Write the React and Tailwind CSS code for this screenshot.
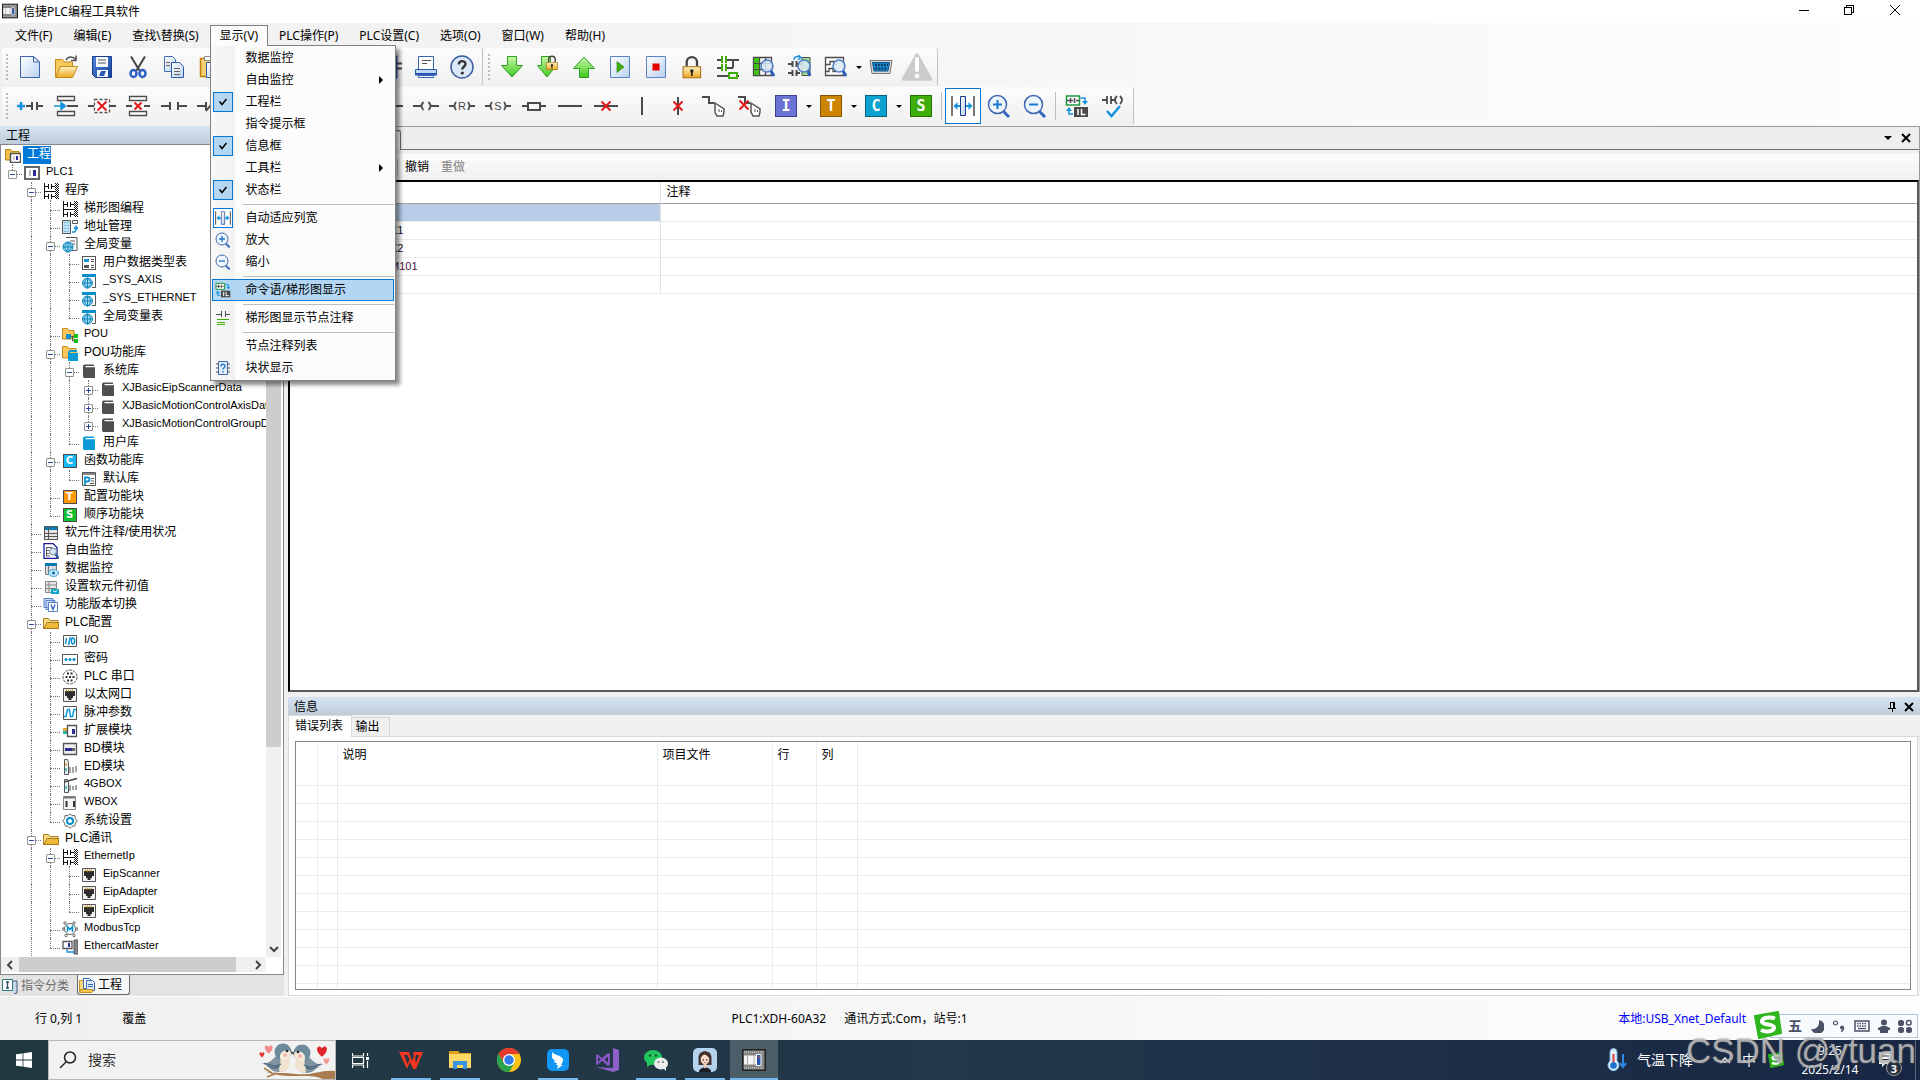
import React from "react";

const UI = "font-['Noto_Sans','Noto_Sans_CJK_SC',sans-serif]";
const DARK = "#4b4b4b";

function Svg({ s = 24, w, h, children, crisp }) {
  const W = w || s;
  const H = h || s;
  return (
    <svg
      width={W}
      height={H}
      viewBox={`0 0 ${W} ${H}`}
      fill="none"
      shapeRendering={crisp ? "crispEdges" : "auto"}
      className="block shrink-0"
      aria-hidden="true"
    >
      {children}
    </svg>
  );
}

/* ---------- shared gradients ---------- */
function Defs() {
  return (
    <svg width="0" height="0" className="absolute" aria-hidden="true">
      <defs>
        <linearGradient id="page" x1="0" y1="0" x2="1" y2="1">
          <stop offset="0" stopColor="#ffffff" />
          <stop offset="1" stopColor="#b9d0ee" />
        </linearGradient>
        <linearGradient id="gold" x1="0" y1="0" x2="0" y2="1">
          <stop offset="0" stopColor="#fff3c4" />
          <stop offset="1" stopColor="#f0a51e" />
        </linearGradient>
        <linearGradient id="green" x1="0" y1="0" x2="0" y2="1">
          <stop offset="0" stopColor="#c8f7a8" />
          <stop offset="1" stopColor="#3fc81e" />
        </linearGradient>
        <linearGradient id="blue" x1="0" y1="0" x2="1" y2="1">
          <stop offset="0" stopColor="#4f86d8" />
          <stop offset="1" stopColor="#1742a0" />
        </linearGradient>
      </defs>
    </svg>
  );
}

/* ---------- file toolbar icons ---------- */
const NewIcon = () => (
  <Svg>
    <path d="M2.5 1.500h13l6 5.500v15.500h-19z" fill="url(#page)" stroke="#3c64a8" />
    <path d="M15.500 1.500v5.500h6z" fill="#e7f0fc" stroke="#3c64a8" />
  </Svg>
);
const OpenIcon = () => (
  <Svg>
    <path d="M1.500 22V4.500h7l2 2.500h8v4" fill="#f5c95c" stroke="#c68a17" />
    <path d="M1.500 22.500l5-11h17l-5 11z" fill="url(#gold)" stroke="#c68a17" />
    <path d="M12 5c2-4 7-4 9.500-.5M22 0.500v5h-5" stroke="#555" strokeWidth="1.500" />
  </Svg>
);
const SaveIcon = () => (
  <Svg>
    <path d="M2.500 1.500h19v21h-16l-3-3z" fill="url(#blue)" stroke="#1b3c86" />
    <path d="M6 2h12v10H6z" fill="#f6f9ff" />
    <path d="M8 5h8M8 8h8" stroke="#555" />
    <path d="M7 15h11v7H7z" fill="#f6f9ff" />
    <path d="M9 21l2-5h5l-2 5z" fill="#2a5bb8" />
  </Svg>
);
const CutIcon = () => (
  <Svg>
    <path d="M5 1.500l8.500 14M19 1.500l-8.500 14" stroke="#444" strokeWidth="2" />
    <ellipse cx="7.500" cy="18.500" rx="3" ry="3.500" stroke="#2e62c4" strokeWidth="2.500" />
    <ellipse cx="16.500" cy="18.500" rx="3" ry="3.500" stroke="#2e62c4" strokeWidth="2.500" />
  </Svg>
);
const CopyIcon = () => (
  <Svg>
    <path d="M2.500 1.500h8l3 3v12h-11z" fill="url(#page)" stroke="#4270b8" />
    <path d="M9.500 7.500h8l4 4v11h-12z" fill="url(#page)" stroke="#2f5ca8" />
    <path d="M12 13.500h6M12 16.500h6M12 19.500h6M4 7.500h4M4 10.500h4" stroke="#666" />
  </Svg>
);
const PasteIcon = () => (
  <Svg>
    <path d="M2.500 3.500h16v18h-16z" fill="#f7cf70" stroke="#c07d0e" strokeWidth="1.500" />
    <path d="M6.500 1.500h8v4h-8z" fill="#fff" stroke="#888" />
    <path d="M8.500 7.500h10l3 3v12h-13z" fill="url(#page)" stroke="#2f5ca8" />
    <path d="M12 13.500h6M12 16.500h6" stroke="#666" />
  </Svg>
);
const FindReplaceIcon = () => (
  <Svg>
    <path d="M2.500 1.500h16v21h-16z" fill="url(#page)" stroke="#2f5ca8" strokeWidth="2" />
    <path d="M19 8.500h5M19 13.500h5" stroke={DARK} strokeWidth="2" />
  </Svg>
);
const PrintIcon = () => (
  <Svg>
    <path d="M4.500 1.500h15v13h-15z" fill="#fff" stroke="#3a66b0" />
    <path d="M8 5.500h9M8 8.500h5" stroke="#555" />
    <path d="M1.500 14.500h21v4h-21z" fill="#c3d8f5" stroke="#2f5ca8" />
    <path d="M1 18h22v2.500H1z" fill="#2858b5" />
    <path d="M4.500 20.500h15v2h-15z" fill="#fff" stroke="#3a66b0" />
  </Svg>
);
const HelpIcon = () => (
  <Svg>
    <circle cx="12" cy="12" r="11" fill="#dbe8f8" stroke="#3a5f9f" strokeWidth="1.500" />
    <path d="M8.800 9.500c0-4.500 6.700-4.300 6.700-.5 0 2.500-3.200 2.600-3.200 5.500" stroke="#333" strokeWidth="2.400" />
    <circle cx="12.300" cy="18" r="1.600" fill="#333" />
  </Svg>
);
const ArrowDown = () => (
  <Svg>
    <path d="M7.500 1.500h9v9h6L12 22 1.500 10.500h6z" fill="url(#green)" stroke="#2e9e27" />
  </Svg>
);
const ArrowUp = () => (
  <Svg>
    <path d="M7.500 22.500h9v-9h6L12 2 1.500 13.500h6z" fill="url(#green)" stroke="#2e9e27" />
  </Svg>
);
const LockShape = ({ x, y, k }) => (
  <g transform={`translate(${x} ${y}) scale(${k})`}>
    <path d="M7 11V7a5 5 0 0110 0v4" stroke="#444" strokeWidth="2.200" />
    <path d="M3.500 11.500h17v10.500h-17z" fill="url(#gold)" stroke="#a76d12" />
    <path d="M10.500 14h3v2.500l-.7.800v3h-1.600v-3l-.7-.8z" fill="#222" />
  </g>
);
const ArrowLock = () => (
  <Svg>
    <path d="M5.500 1.500h9v9h6L11 22 1.500 10.500h4z" fill="url(#green)" stroke="#2e9e27" />
    <LockShape x={8} y={0} k={0.66} />
  </Svg>
);
const LockIcon = () => (
  <Svg>
    <LockShape x={-0.500} y={0} k={1.030} />
  </Svg>
);
const PlayIcon = () => (
  <Svg>
    <path d="M2.500 1.500h19v21h-19z" fill="url(#page)" stroke="#5b83c4" />
    <path d="M9 6.500v11l7-5.500z" fill="#3fae0a" stroke="#2c7c08" strokeWidth=".6" />
  </Svg>
);
const StopIcon = () => (
  <Svg>
    <path d="M2.500 1.500h19v21h-19z" fill="url(#page)" stroke="#5b83c4" />
    <path d="M8.500 8.500h7v7h-7z" fill="#e60000" />
  </Svg>
);
const LadderIcon = () => (
  <Svg crisp>
    <path d="M1 4.500h5M10 4.500h13M1 12.500h5M10 12.500h7M16.500 4v9M1 20.500h11M20 20.500h3" stroke={DARK} strokeWidth="2" />
    <path d="M6 1v7M10 1v7M6 9v7M10 9v7" stroke="#3fae0a" strokeWidth="2" />
    <path d="M13 18h8v5h-8z" stroke="#3fae0a" strokeWidth="2" />
  </Svg>
);
const Lens = ({ x = 15, y = 11, r = 6, ex = 22, ey = 21 }) => (
  <>
    <path d={`M${x + r * 0.600} ${y + r * 0.700}L${ex} ${ey}`} stroke="#2d5fc0" strokeWidth="3" />
    <circle cx={x} cy={y} r={r} fill="#dbeaf8" fillOpacity=".85" stroke="#4f7cc4" strokeWidth="1.500" />
  </>
);
const TableLens = () => (
  <Svg>
    <path d="M1.500 2.500h18v18h-18zM7.500 2.500v18M13.500 2.500v18M1.500 8.500h18M1.500 14.500h18" stroke={DARK} strokeWidth="1.300" />
    <path d="M2 3h5v17H2z" fill="#3fc010" />
    <path d="M2 8.500h5M2 14.500h5" stroke={DARK} />
    <Lens />
  </Svg>
);
const ContactLens = () => (
  <Svg>
    <path d="M0 9h4M9 9h5M0 18h4M9 18h3M4.500 6v6M8.500 6v6M4.500 15v6M8.500 15v6" stroke={DARK} strokeWidth="2" />
    <path d="M14 2.500h8v18h-8z" fill="#9fe08a" stroke={DARK} />
    <path d="M6 5c0-3 2-4 6-3M10 0l3 2.500-3 2.500" stroke="#1593dd" strokeWidth="1.500" />
    <Lens x={16} />
  </Svg>
);
const WaveLens = () => (
  <Svg>
    <path d="M1.500 2.500h18v18h-18z" fill="#fff" stroke={DARK} strokeWidth="1.300" />
    <path d="M2 9.500h4v-3h4v3h3M2 16.500h3v-3h4v3h3" stroke={DARK} strokeWidth="1.300" />
    <Lens />
  </Svg>
);
const PortIcon = () => (
  <Svg>
    <path d="M1 5.500h22l-2 13H3z" fill="#d9d9d9" stroke="#777" />
    <path d="M3.500 7.500h17l-1.500 8.500h-14z" fill="#1486cc" stroke="#0d4f80" />
    <path d="M6 10h13M6.500 13.500h12" stroke="#072d4d" strokeWidth="2" strokeDasharray="1.600 1.400" />
  </Svg>
);
const WarnIcon = () => (
  <Svg s={32}>
    <path d="M16 4L29.500 28h-27z" fill="#cbcbcb" stroke="#cbcbcb" strokeWidth="3.500" strokeLinejoin="round" />
    <path d="M16 8v11" stroke="#fff" strokeWidth="4" strokeLinecap="round" />
    <circle cx="16" cy="25" r="2.200" fill="#fff" />
  </Svg>
);

/* ---------- ladder toolbar icons ---------- */
const L = (props) => <path stroke={DARK} strokeWidth="2" {...props} />;
const RedX = ({ x = 12, y = 12, r = 4.500 }) => (
  <path d={`M${x - r} ${y - r}l${r * 2} ${r * 2}M${x + r} ${y - r}l${-r * 2} ${r * 2}`} stroke="#e01b1b" strokeWidth="2" />
);
const InsertContact = () => (
  <Svg w={28} h={24}>
    <path d="M1 12h8M5 8v8" stroke="#1593dd" strokeWidth="2.500" />
    <L d="M10 12h6M16 8v8M21 8v8M21 12h6" />
  </Svg>
);
const InsertRow = () => (
  <Svg>
    <path d="M3.500 2.500h17v4h-17zM3.500 17.500h17v4h-17z" fill="#fff" stroke={DARK} strokeWidth="1.300" />
    <L d="M13 12h11" />
    <path d="M0 12h9M7 8.500l4.500 3.500L7 15.500z" fill="#1593dd" stroke="#1593dd" strokeWidth="1.500" />
  </Svg>
);
const DelContact = () => (
  <Svg w={28} h={24}>
    <L d="M0 12h6M22 12h6" />
    <path d="M6.500 5.500h15v13h-15z" fill="#fff" stroke={DARK} strokeDasharray="3 2" strokeWidth="1.300" />
    <RedX x={14} />
  </Svg>
);
const DelRow = () => (
  <Svg>
    <path d="M3.500 2.500h17v4h-17zM3.500 17.500h17v4h-17z" fill="#fff" stroke={DARK} strokeWidth="1.300" />
    <L d="M0 12h6M18 12h6" />
    <RedX r={3.500} />
  </Svg>
);
const Contact = () => (
  <Svg w={28} h={24} crisp>
    <L d="M1 12h9M10 8v8M18 8v8M18 12h9" />
  </Svg>
);
const ContactNc = () => (
  <Svg w={28} h={24}>
    <L d="M1 12h9M10 8v8M18 8v8M18 12h9M10 17l8-10" />
  </Svg>
);
const Coil = ({ t }) => (
  <Svg w={28} h={24}>
    <L d={t ? "M1 12h6M21 12h6" : "M1 12h8M19 12h8"} />
    <path d={t ? "M8 8q-3 4 0 8M20 8q3 4 0 8" : "M11.500 8q-4 4 0 8M16.500 8q4 4 0 8"} stroke={DARK} strokeWidth="1.800" />
    {t && (
      <text x="14" y="16" textAnchor="middle" fontSize="11" fill={DARK} fontFamily="Liberation Sans">
        {t}
      </text>
    )}
  </Svg>
);
const BoxIcon = () => (
  <Svg crisp>
    <L d="M0 12h6M18 12h6M6 8.500h12v7H6z" />
  </Svg>
);
const HLine = ({ x }) => (
  <Svg>
    <L d="M0 12h24" />
    {x && <RedX />}
  </Svg>
);
const VLine = ({ x }) => (
  <Svg>
    <L d="M12 3v18" />
    {x && <RedX />}
  </Svg>
);
const DrawLine = ({ x }) => (
  <Svg>
    <L d="M0 3h7v6h5" />
    {x && <RedX x={6} y={11} />}
    <path d="M13 9l9 6v3l-1 4h-6l-2-4z" fill="#fff" stroke="#555" strokeWidth="1.500" />
    <path d="M17 15v3M19.500 16v2" stroke="#555" />
  </Svg>
);
function Letter({ t, c, b, small }) {
  return small ? (
    <span
      className="flex size-[14px] shrink-0 items-center justify-center border border-[#4b4b4b] text-[10px] leading-none font-bold text-white font-['DejaVu_Sans',sans-serif]"
      style={{ background: c }}
    >
      {t}
    </span>
  ) : (
    <span
      className="flex size-[22px] shrink-0 items-center justify-center border text-[15px] leading-none font-bold text-white font-['DejaVu_Sans_Mono',monospace]"
      style={{ background: c, borderColor: b }}
    >
      {t}
    </span>
  );
}
const FitIcon = ({ s = 24 }) => (
  <svg width={s} height={s} viewBox="0 0 24 24" fill="none" className="block shrink-0" aria-hidden="true">
    <path d="M1 2v20M23 2v20" stroke={DARK} strokeWidth="1.500" />
    <path d="M9.500 2.500h5v19h-5z" fill="url(#page)" stroke="#1b3c86" />
    <path d="M4 12h5M15 12h5" stroke="#1593dd" strokeWidth="2" />
    <path d="M2.500 12l4-4v8zM21.500 12l-4-4v8z" fill="#1593dd" />
  </svg>
);
const ZoomIcon = ({ plus, s = 24 }) => (
  <svg width={s} height={s} viewBox="0 0 24 24" fill="none" className="block shrink-0" aria-hidden="true">
    <path d="M16 17l6 6" stroke="#3467c0" strokeWidth="3" />
    <circle cx="10.500" cy="10.500" r="9" fill="#eef5fd" stroke="#3f68b0" strokeWidth="1.500" />
    <path d={plus ? "M6 10.500h9M10.500 6v9" : "M6 10.500h9"} stroke="#1b78d0" strokeWidth="2" />
  </svg>
);
const SwapIcon = ({ s = 24 }) => (
  <svg width={s} height={s} viewBox="0 0 24 24" fill="none" className="block shrink-0" aria-hidden="true">
    <path d="M1.500 2h13v9h-13z" fill="#fff" stroke="#1b9a3c" strokeWidth="1.500" />
    <path d="M2 6.500h3M11 6.500h3M5.500 4v5M8 6.500h-2M9.500 4v5" stroke={DARK} strokeWidth="1.500" />
    <path d="M15.500 4h4.500v5" stroke="#1593dd" strokeWidth="1.500" />
    <path d="M17 7h6l-3 4zM1 17h6l-3-4z" fill="#1593dd" />
    <path d="M4 16v4h4" stroke="#1593dd" strokeWidth="1.500" />
    <path d="M9 13h14v10H9z" fill="#4b4b4b" />
    <path d="M13 15v6M16.500 15v5.500h4" stroke="#fff" strokeWidth="1.500" />
  </svg>
);
const CheckLogic = () => (
  <Svg>
    <path d="M1 6h5M6 2v8M10 2v8M10 6h4M16 2q-4 4 0 8M19 2q4 4 0 8" stroke={DARK} strokeWidth="1.800" />
    <path d="M6 17l4.500 5L19 12" stroke="#1593dd" strokeWidth="2.500" />
  </Svg>
);
const NoteIcon = () => (
  <Svg s={16} crisp>
    <path d="M1 4h5M10 4h5M6 1v6M10 1v6" stroke={DARK} />
    <path d="M2 9.500h12M2 12h8M2 14.500h8" stroke="#3fae0a" />
  </Svg>
);
const BlockIcon = () => (
  <Svg s={16}>
    <path d="M3.500 1.500h9v13h-9z" fill="#e4eefb" stroke="#3f68b0" />
    <path d="M1 4h2.500M1 8h2.500M1 12h2.500M12.500 4H15M12.500 8H15M12.500 12H15" stroke="#555" />
    <path d="M6 6.500c0-3 4-3 4-.3 0 1.600-2 1.600-2 3.300M8 11v1.500" stroke="#1b78d0" strokeWidth="1.400" />
  </Svg>
);

/* ---------- tree icons ---------- */
const K = "#555";
const treeIcons = {
  root: (
    <Svg s={16}>
      <path d="M.5 2.500h5l1.500 2h7V13H.5z" fill="#f3c04d" stroke="#b98418" />
      <path d="M5.500 6.500h10v9h-10z" fill="#fff" stroke={K} strokeWidth="1.500" />
      <path d="M11 9h2v4h-2z" fill="#2a2a90" />
      <path d="M8 9h2v4H8z" fill="#ccc" />
    </Svg>
  ),
  plc: (
    <Svg s={16} crisp>
      <path d="M1 2h14v12H1z" fill="#fff" stroke="#666" strokeWidth="2" />
      <path d="M9 5h3v6H9z" fill="#2a2a90" />
      <path d="M5 5h2v6H5z" fill="#bbb" />
    </Svg>
  ),
  ladder: (
    <Svg s={16} crisp>
      <path d="M1.500 0v16M1 3.500h4M8 3.500h4M1 8.500h11M1 13.500h4M8 13.500h4M5.500 1v5M8.500 1v5M5.500 11v5M8.500 11v5" stroke="#111" />
      <path d="M12.500 0v16M14.500 0v16" stroke="#111" strokeDasharray="1 1" />
      <path d="M13.500 1v15M15.500 1v15" stroke="#111" strokeDasharray="1 1" />
    </Svg>
  ),
  addr: (
    <Svg s={16}>
      <path d="M.5 1.500h8v13h-8z" fill="#bfe3f7" stroke={K} />
      <path d="M3 3v11M6 3v11" stroke="#3a8ab8" strokeDasharray="1 2" />
      <path d="M10.500 1.500h5v3h-5z" fill="#fff" stroke={K} />
      <path d="M10 13h2c2 0 2-2 2-4M12 10l2-2.500 2 2.500" stroke="#1593dd" strokeWidth="1.500" />
    </Svg>
  ),
  globalDoc: (
    <Svg s={16}>
      <path d="M4 .5h11v13H9" fill="#fff" stroke={K} />
      <path d="M8 4h5M10 7h3" stroke={K} />
      <circle cx="6" cy="10" r="5" fill="#9fd8f2" stroke="#0f86bb" />
      <path d="M1 10h10M6 5v10M6 5c-4 3-4 7 0 10M6 5c4 3 4 7 0 10" stroke="#0f86bb" />
    </Svg>
  ),
  types: (
    <Svg s={16} crisp>
      <path d="M1.500 1.500h13v13h-13z" fill="#fff" stroke={K} />
      <path d="M3 4h5v3H3z" fill="#1593dd" />
      <path d="M3 10h5v3H3z" fill={K} />
      <path d="M10 4.500h3M10 6.500h3M10 10.500h3M10 12.500h3" stroke={K} />
    </Svg>
  ),
  globe: (
    <Svg s={16}>
      <path d="M1 2h13.500v12.500H11" fill="#fff" stroke={K} />
      <path d="M1 1h14v3H1z" fill="#0a8fce" />
      <circle cx="6.500" cy="10" r="5" fill="#9fd8f2" stroke="#0f86bb" />
      <path d="M1.500 10h10M6.500 5v10M6.500 5c-4 3-4 7 0 10M6.500 5c4 3 4 7 0 10" stroke="#0f86bb" />
    </Svg>
  ),
  pou: (
    <Svg s={16}>
      <path d="M.5 1.500h5l1.500 2h5V12H.5z" fill="#fbc65b" stroke="#c08b1c" />
      <path d="M4 7h5v5H4z" fill="#0a8fce" />
      <path d="M12 7h4v4h-4zM12 12h4v4h-4z" fill="#0fc20f" />
      <path d="M9 9.500h3M10.500 9v5h2" stroke={K} />
    </Svg>
  ),
  pouLib: (
    <Svg s={16}>
      <path d="M.5 1.500h5l1.500 2h7V13H.5z" fill="#fbc65b" stroke="#c08b1c" />
      <path d="M6 7l1.500-2H15v2h-7v1h8v8H6z" fill="#0a9ad6" />
    </Svg>
  ),
  book: (
    <Svg s={16}>
      <path d="M2 3.500C2 2 3 1.500 4 1.500h9v1.500H4.500v1.200H14V15H4c-1.500 0-2-.5-2-2z" fill="#4f4f4f" />
    </Svg>
  ),
  bookBlue: (
    <Svg s={16}>
      <path d="M2 3.500C2 2 3 1.500 4 1.500h9v1.500H4.500v1.200H14V15H4c-1.500 0-2-.5-2-2z" fill="#0a9ad6" />
    </Svg>
  ),
  c: <Letter small t="C" c="#17b9f5" />,
  t: <Letter small t="T" c="#ff9900" />,
  s: <Letter small t="S" c="#10c030" />,
  p: (
    <Svg s={16}>
      <path d="M1.500 1.500h13v13h-13z" fill="#fff" stroke={K} />
      <path d="M2 2h12v2H2z" fill="#888" />
      <path d="M4 14V6.500h2.500a2 2 0 010 4H4" stroke="#0a8fce" strokeWidth="1.800" />
      <path d="M10 7.500h3M10 10h3M9 12.500h4" stroke={K} />
    </Svg>
  ),
  table: (
    <Svg s={16} crisp>
      <path d="M1.500 1.500h13v13h-13z" fill="#e4e4e4" stroke={K} />
      <path d="M2 2h12v3H2z" fill="#0a7bb4" />
      <path d="M5.500 2v12M2 8.500h12M2 11.500h12" stroke={K} />
    </Svg>
  ),
  free: (
    <Svg s={16}>
      <path d="M1 .5h9l4 4v11H1z" fill="#fff" stroke="#1a1a9a" strokeWidth="1.300" />
      <path d="M3 4.500h6M3 7.500h3M3 10.500h3M3 13h4M3.500 4v9" stroke={K} />
      <path d="M12 11l4 4.500" stroke="#2d4fa0" strokeWidth="2" />
      <circle cx="10" cy="8.500" r="3.500" fill="#cfe7f5" stroke="#789" />
    </Svg>
  ),
  data: (
    <Svg s={16}>
      <path d="M2.500 2.500h11v11h-11z" fill="#ddd" stroke="#777" />
      <path d="M2 2h12v3H2z" fill="#0a7bb4" />
      <path d="M5.500 5v9" stroke="#777" />
      <ellipse cx="10.500" cy="12" rx="5" ry="3.500" fill="#bfe8fa" stroke="#38a3d0" />
      <circle cx="10.500" cy="12" r="1.500" fill="#0a6fa6" />
    </Svg>
  ),
  init: (
    <Svg s={16}>
      <path d="M2.500 2.500h11v11h-11z" fill="#e6e6e6" stroke="#888" />
      <path d="M2.500 6h11M2.500 9.500h11M6 2v12" stroke="#888" />
      <path d="M8 10h8v5H8z" fill="#0aa5c8" />
      <path d="M10 11.500l2 1.500 2-1.500" stroke="#fff" />
    </Svg>
  ),
  ver: (
    <Svg s={16}>
      <path d="M1 1.500h9v9H1zM3 3.500h9v9H3z" fill="#c6dcf6" stroke="#5b83c4" />
      <path d="M5.500 5.500h9v9h-9z" fill="#fff" stroke="#5b83c4" />
      <path d="M8 7.500l2 5 2-5" stroke="#2763c4" strokeWidth="1.300" />
    </Svg>
  ),
  folder: (
    <Svg s={16}>
      <path d="M.5 13.500v-10h5l1.500 2h8v8z" fill="#f6d984" stroke="#a87a1c" />
      <path d="M1 13.500l3-6h11.500v6z" fill="#f0b93a" stroke="#a87a1c" />
    </Svg>
  ),
  io: (
    <Svg s={16}>
      <path d="M1.500 2.500h13v11h-13z" fill="#fff" stroke={K} />
      <path d="M4.500 5L3.500 11M8.500 4L6.500 12" stroke="#0a8fce" strokeWidth="1.500" />
      <ellipse cx="11" cy="8" rx="1.600" ry="3" stroke="#0a8fce" strokeWidth="1.500" />
    </Svg>
  ),
  pwd: (
    <Svg s={16}>
      <path d="M.5 3.500h15v10H.5z" fill="#fff" stroke={K} />
      <circle cx="4" cy="8.500" r="1.500" fill="#0a8fce" />
      <circle cx="8" cy="8.500" r="1.500" fill="#0a8fce" />
      <circle cx="12" cy="8.500" r="1.500" fill="#0a8fce" />
    </Svg>
  ),
  serial: (
    <Svg s={16}>
      <circle cx="8" cy="8" r="7" fill="#fff" stroke={K} strokeDasharray="3 1" />
      <path d="M5 4.500h7M3.500 8h10M5 11.500h7" stroke="#333" strokeWidth="2" strokeDasharray="2 1.500" />
    </Svg>
  ),
  eth: (
    <Svg s={16}>
      <path d="M1.500 1.500h13v13h-13z" fill="#f2f2f2" stroke={K} />
      <path d="M3 4h10v5h-2v2H9.500v2h-3v-2H5V9H3z" fill="#2d2d2d" />
      <path d="M4 3.500h8" stroke="#c99a30" strokeWidth="2" strokeDasharray="1 1" />
    </Svg>
  ),
  pulse: (
    <Svg s={16}>
      <path d="M1.500 1.500h13v13h-13z" fill="#fff" stroke={K} />
      <path d="M2 11.500h2l1.500-7h2l1 7h2l1.500-7H14" stroke="#0a9ad6" strokeWidth="1.500" />
    </Svg>
  ),
  ext: (
    <Svg s={16}>
      <path d="M1 5h5v3H1z" fill="#e5a13a" />
      <path d="M1 8h5v3H1z" fill="#28b5a5" />
      <path d="M5.500 2.500h9v11h-9z" fill="#fff" stroke={K} strokeWidth="1.300" />
      <path d="M10 6h3v5h-3z" fill="#2a2a90" />
    </Svg>
  ),
  bd: (
    <Svg s={16}>
      <path d="M1.500 2.500h13v11h-13z" fill="#eee" stroke={K} strokeWidth="1.300" />
      <path d="M3 7h7v3H3z" fill="#2a2a90" />
      <path d="M10 7h3v3h-3z" fill="#666" />
    </Svg>
  ),
  ed: (
    <Svg s={16}>
      <path d="M2.500.5h3l1 3v12h-4z" fill="#e8f2f2" stroke={K} />
      <path d="M4 4v3" stroke="#e5a13a" strokeWidth="1.500" />
      <path d="M4 9v3" stroke="#28b5a5" strokeWidth="1.500" />
      <path d="M8 8v6M11 8v6M14 7v6" stroke="#888" strokeWidth="1.500" />
    </Svg>
  ),
  fourg: (
    <Svg s={16}>
      <path d="M2.500 2.500h3l1 2v11h-4z" fill="#e8f2f2" stroke={K} />
      <path d="M2 5l13-3.500" stroke="#444" strokeWidth="1.500" />
      <path d="M4 9v3" stroke="#28b5a5" strokeWidth="1.500" />
      <path d="M8 8v6M11 9v4M14 8v5" stroke="#888" strokeWidth="1.500" />
    </Svg>
  ),
  wbox: (
    <Svg s={16}>
      <path d="M1.500 1.500h12v13h-12z" fill="#f4f4f4" stroke="#888" />
      <path d="M2 2.500h11" stroke="#777" strokeWidth="2" />
      <path d="M4.500 6v6M12 6v6" stroke="#333" strokeWidth="2" />
    </Svg>
  ),
  gear: (
    <Svg s={16}>
      <path d="M8 .8l2 2 2.900-.4.400 2.900 2 2.700-2 2-.4 2.900-2.900.4-2 2-2-2-2.900-.4-.4-2.900-2-2 2-2.700.4-2.900 2.900.4z" fill="#fff" stroke="#666" />
      <circle cx="8" cy="8" r="3" stroke="#0a8fce" strokeWidth="2" />
    </Svg>
  ),
  modbus: (
    <Svg s={16}>
      <circle cx="8" cy="8" r="5.500" fill="#fff" stroke="#666" />
      <path d="M5.500 11V5.500L8 8.500l2.500-3V11" stroke="#0a8fce" strokeWidth="1.500" />
      {[[3, 2], [12, 2], [15, 8], [1, 8], [4, 14.500], [12, 14.500]].map(([x, y]) => (
        <circle key={`${x}-${y}`} cx={x} cy={y} r="1.200" fill="#fff" stroke="#666" />
      ))}
    </Svg>
  ),
  ecat: (
    <Svg s={16}>
      <path d="M1 2.500h9v7H1z" fill="#fff" stroke={K} strokeWidth="1.300" />
      <path d="M6 4h2v4H6z" fill="#2a2a90" />
      <path d="M12 1h4v14h-4z" fill="#888" stroke={K} />
      <path d="M5 10v3h7" stroke="#1593dd" strokeWidth="1.300" />
    </Svg>
  ),
};

/* level, icon, label, expander */
const TREE = [
  [0, "root", "工程"],
  [1, "plc", "PLC1", "-"],
  [2, "ladder", "程序", "-"],
  [3, "ladder", "梯形图编程"],
  [3, "addr", "地址管理"],
  [3, "globalDoc", "全局变量", "-"],
  [4, "types", "用户数据类型表"],
  [4, "globe", "_SYS_AXIS"],
  [4, "globe", "_SYS_ETHERNET"],
  [4, "globe", "全局变量表"],
  [3, "pou", "POU"],
  [3, "pouLib", "POU功能库", "-"],
  [4, "book", "系统库", "-"],
  [5, "book", "XJBasicEipScannerData", "+"],
  [5, "book", "XJBasicMotionControlAxisData", "+"],
  [5, "book", "XJBasicMotionControlGroupData", "+"],
  [4, "bookBlue", "用户库"],
  [3, "c", "函数功能库", "-"],
  [4, "p", "默认库"],
  [3, "t", "配置功能块"],
  [3, "s", "顺序功能块"],
  [2, "table", "软元件注释/使用状况"],
  [2, "free", "自由监控"],
  [2, "data", "数据监控"],
  [2, "init", "设置软元件初值"],
  [2, "ver", "功能版本切换"],
  [2, "folder", "PLC配置", "-"],
  [3, "io", "I/O"],
  [3, "pwd", "密码"],
  [3, "serial", "PLC 串口"],
  [3, "eth", "以太网口"],
  [3, "pulse", "脉冲参数"],
  [3, "ext", "扩展模块"],
  [3, "bd", "BD模块"],
  [3, "ed", "ED模块"],
  [3, "fourg", "4GBOX"],
  [3, "wbox", "WBOX"],
  [3, "gear", "系统设置"],
  [2, "folder", "PLC通讯", "-"],
  [3, "ladder", "EthernetIp", "-"],
  [4, "eth", "EipScanner"],
  [4, "eth", "EipAdapter"],
  [4, "eth", "EipExplicit"],
  [3, "modbus", "ModbusTcp"],
  [3, "ecat", "EthercatMaster"],
];

function continues(i, level) {
  for (let j = i + 1; j < TREE.length; j++) {
    if (TREE[j][0] === level) return true;
    if (TREE[j][0] < level) return false;
  }
  return level === 2;
}

function Guide({ kind, more, exp }) {
  return (
    <span className="relative block h-[18px] w-[19px] shrink-0">
      {(more || kind === "branch") && (
        <span
          className={`absolute top-0 left-[9px] border-l border-dotted border-[#777] ${more ? "h-[18px]" : "h-[10px]"}`}
        />
      )}
      {kind === "branch" && <span className="absolute top-[10px] left-[9px] w-[10px] border-t border-dotted border-[#777]" />}
      {exp && (
        <button
          type="button"
          aria-label={exp === "+" ? "展开" : "折叠"}
          className="absolute top-[6px] left-[5px] size-[9px] rounded-[1px] border border-[#919191] bg-white"
        >
          <span className="absolute top-[3px] left-px h-px w-[5px] bg-[#2b4a9a]" />
          {exp === "+" && <span className="absolute top-px left-[3px] h-[5px] w-px bg-[#2b4a9a]" />}
        </button>
      )}
    </span>
  );
}

function Tree() {
  return (
    <div role="tree" aria-label="工程" className="min-w-0 flex-1 overflow-hidden pl-[2px]">
      {TREE.map(([level, icon, label, exp], i) => {
        const latin = /^[\x20-\x7e]+$/.test(label);
        return (
          <div role="treeitem" key={i} className="flex h-[18px] items-center whitespace-nowrap">
            {Array.from({ length: level }, (_, k) => (
              <Guide key={k} kind={k === level - 1 ? "branch" : "pass"} more={continues(i, k + 1)} exp={k === level - 1 ? exp : null} />
            ))}
            <span className="flex h-[18px] w-[19px] shrink-0 items-center justify-center">{treeIcons[icon]}</span>
            <span
              className={`ml-px h-[18px] pl-1 font-['Liberation_Sans','Noto_Sans_CJK_SC',sans-serif] ${
                latin ? "text-[11px] leading-[15px]" : "text-[12px] leading-[17px]"
              } ${i === 0 ? "bg-[#0078d7] text-white" : "text-black"}`}
            >
              {label}
            </span>
          </div>
        );
      })}
    </div>
  );
}

/* ---------- view menu ---------- */
const Check = () => (
  <Svg s={10}>
    <path d="M1.500 4.500l2.500 3L8.500 2" stroke="#000" strokeWidth="1.500" />
  </Svg>
);
const VIEW_MENU = [
  ["数据监控"],
  ["自由监控", "sub"],
  ["工程栏", "check"],
  ["指令提示框"],
  ["信息框", "check"],
  ["工具栏", "sub"],
  ["状态栏", "check"],
  null,
  ["自动适应列宽", "boxed", <FitIcon s={16} />],
  ["放大", "", <ZoomIcon plus s={16} />],
  ["缩小", "", <ZoomIcon s={16} />],
  null,
  ["命令语/梯形图显示", "hot", <SwapIcon s={16} />],
  null,
  ["梯形图显示节点注释", "", <NoteIcon />],
  null,
  ["节点注释列表"],
  ["块状显示", "", <BlockIcon />],
];

function ViewMenu() {
  return (
    <div
      role="menu"
      className="absolute top-[20px] left-0 z-20 w-[186px] border border-[#808080] bg-[linear-gradient(90deg,#f8f8f8_0,#f1f1f1_24px,#fcfcfc_24px)] p-px shadow-[4px_4px_4px_rgba(0,0,0,0.45)]"
    >
      {VIEW_MENU.map((m, i) => {
        if (!m) return <div key={i} role="separator" className="ml-[31px] flex h-[6px] items-center"><span className="h-px w-full bg-[#bdbdbd]" /></div>;
        const [label, kind, icon] = m;
        return (
          <button
            type="button"
            role={kind === "check" ? "menuitemcheckbox" : "menuitem"}
            aria-checked={kind === "check" ? true : undefined}
            key={i}
            className={`flex h-[22px] w-full items-center border text-left ${
              kind === "hot" ? "border-[#0078d7] bg-[#b3d7f3]" : "border-transparent"
            }`}
          >
            <span
              className={`flex size-[20px] shrink-0 items-center justify-center border ${
                kind === "check" ? "border-[#0078d7] bg-[#b3d7f3]" : kind === "boxed" ? "border-[#0078d7] bg-white" : "border-transparent"
              }`}
            >
              {kind === "check" ? <Check /> : icon}
            </span>
            <span className="flex-1 pl-[13px]">{label}</span>
            {kind === "sub" && <span className="mr-[10px] border-y-4 border-l-4 border-y-transparent border-l-black" />}
          </button>
        );
      })}
    </div>
  );
}

function MenuBar() {
  const items = ["文件(F)", "编辑(E)", "查找\\替换(S)", "显示(V)", "PLC操作(P)", "PLC设置(C)", "选项(O)", "窗口(W)", "帮助(H)"];
  return (
    <nav className="flex h-[25px] items-start gap-px pt-[2px] pl-[5px]">
      {items.map((t) => {
        const open = t.startsWith("显示");
        return (
          <div key={t} className="relative">
            <button
              type="button"
              className={`relative h-[21px] border border-b-0 px-[9px] whitespace-nowrap ${
                open ? "z-30 border-[#808080] bg-[#fcfcfc]" : "border-transparent"
              }`}
            >
              {t}
            </button>
            {open && <ViewMenu />}
          </div>
        );
      })}
    </nav>
  );
}

/* ---------- toolbars ---------- */
const Handle = () => (
  <span className="mx-[4px] my-auto h-[27px] w-[2px] shrink-0 bg-[repeating-linear-gradient(180deg,#bdbdbd_0,#bdbdbd_2px,transparent_2px,transparent_4px)]" />
);
function Tool({ label, children, on }) {
  return (
    <button
      type="button"
      aria-label={label}
      className={`flex h-[36px] w-[36px] shrink-0 items-center justify-center self-center border ${
        on ? "border-[#0078d7] bg-white" : "border-transparent"
      }`}
    >
      {children}
    </button>
  );
}
const Drop = () => (
  <button type="button" aria-label="更多" className="flex w-[9px] shrink-0 items-center justify-center self-center">
    <span className="border-x-[3px] border-t-[3px] border-x-transparent border-t-black" />
  </button>
);
const Sep = () => <span className="my-auto mr-[3px] ml-[2px] h-[28px] w-px shrink-0 bg-[#bdbdbd]" />;
const strip = "flex h-[38px] shrink-0 rounded-[3px] bg-linear-to-b from-[#fcfcfc] to-[#f0f0f0] pr-[2px] border-r border-[#c4c4c4]";

function Toolbars() {
  return (
    <>
      <div className="flex h-[39px] overflow-hidden pl-[2px]">
        <div className={strip}>
          <Handle />
          <Tool label="新建"><NewIcon /></Tool>
          <Tool label="打开"><OpenIcon /></Tool>
          <Tool label="保存"><SaveIcon /></Tool>
          <Tool label="剪切"><CutIcon /></Tool>
          <Tool label="复制"><CopyIcon /></Tool>
          <Tool label="粘贴"><PasteIcon /></Tool>
          <Tool label="后退"><ArrowDown /></Tool>
          <Tool label="前进"><ArrowUp /></Tool>
          <Tool label="查找"><ZoomIcon /></Tool>
          <Tool label="查找表"><TableLens /></Tool>
          <Tool label="替换"><FindReplaceIcon /></Tool>
          <Tool label="打印"><PrintIcon /></Tool>
          <Tool label="帮助"><HelpIcon /></Tool>
        </div>
        <div className={`${strip} ml-px`}>
          <Handle />
          <Tool label="下载"><ArrowDown /></Tool>
          <Tool label="保密下载"><ArrowLock /></Tool>
          <Tool label="上传"><ArrowUp /></Tool>
          <Tool label="运行"><PlayIcon /></Tool>
          <Tool label="停止"><StopIcon /></Tool>
          <Tool label="加密"><LockIcon /></Tool>
          <Tool label="梯形图监控"><LadderIcon /></Tool>
          <Tool label="数据监控"><TableLens /></Tool>
          <Tool label="自由监控"><ContactLens /></Tool>
          <Tool label="示波器"><WaveLens /></Tool>
          <Drop />
          <Tool label="串口"><PortIcon /></Tool>
          <Tool label="警告"><WarnIcon /></Tool>
        </div>
      </div>
      <div className="flex h-[39px] overflow-hidden pl-[2px]">
        <div className={strip}>
          <Handle />
          <Tool label="插入节点"><InsertContact /></Tool>
          <Tool label="插入行"><InsertRow /></Tool>
          <Tool label="删除节点"><DelContact /></Tool>
          <Tool label="删除行"><DelRow /></Tool>
          <Tool label="常开"><Contact /></Tool>
          <Tool label="常闭"><ContactNc /></Tool>
          <Tool label="上升沿"><Contact /></Tool>
          <Tool label="下降沿"><Contact /></Tool>
          <Tool label="取反"><Contact /></Tool>
          <Tool label="立即"><Contact /></Tool>
          <Tool label="立即常闭"><Contact /></Tool>
          <Tool label="线圈"><Coil /></Tool>
          <Tool label="复位"><Coil t="R" /></Tool>
          <Tool label="置位"><Coil t="S" /></Tool>
          <Tool label="指令框"><BoxIcon /></Tool>
          <Tool label="横线"><HLine /></Tool>
          <Tool label="删除横线"><HLine x /></Tool>
          <Tool label="竖线"><VLine /></Tool>
          <Tool label="删除竖线"><VLine x /></Tool>
          <Tool label="画线"><DrawLine /></Tool>
          <Tool label="擦线"><DrawLine x /></Tool>
          <Tool label="指令"><Letter t="I" c="#6a74d4" b="#3b4390" /></Tool>
          <Drop />
          <Tool label="配置"><Letter t="T" c="#cc8500" b="#85540a" /></Tool>
          <Drop />
          <Tool label="函数"><Letter t="C" c="#0aa3d0" b="#0a5f80" /></Tool>
          <Drop />
          <Tool label="顺序"><Letter t="S" c="#3fae0a" b="#22700a" /></Tool>
          <Sep />
          <Tool label="自动适应列宽" on><FitIcon /></Tool>
          <Tool label="放大"><ZoomIcon plus /></Tool>
          <Tool label="缩小"><ZoomIcon /></Tool>
          <Sep />
          <Tool label="命令语/梯形图"><SwapIcon /></Tool>
          <Tool label="语法检查"><CheckLogic /></Tool>
        </div>
      </div>
    </>
  );
}

/* ---------- left panel ---------- */
const Chevron = ({ d }) => (
  <Svg s={10}>
    <path d={d} stroke="#444" strokeWidth="2" />
  </Svg>
);
const barHead = "flex items-center bg-linear-to-b from-[#d6e4f2] to-[#bfcddb]";

function ProjectPanel() {
  return (
    <aside className="flex w-[284px] shrink-0 flex-col">
      <h2 className={`${barHead} h-[18px] shrink-0 pt-px pl-[6px]`}>工程</h2>
      <div className="flex min-h-0 flex-1 flex-col border border-[#828790] bg-white pt-px pb-[2px]">
        <div className="flex min-h-0 flex-1">
          <Tree />
          <div className="mr-[2px] flex w-[15px] shrink-0 flex-col items-center bg-[#f0f0f0]">
            <span className="flex h-[17px] items-center"><Chevron d="M1 7l4-4 4 4" /></span>
            <span className="h-[72%] w-full bg-[#cdcdcd]" />
            <span className="mt-auto flex h-[17px] items-center"><Chevron d="M1 3l4 4 4-4" /></span>
          </div>
        </div>
        <div className="mr-[17px] flex h-[15px] shrink-0 items-center bg-[#f0f0f0]">
          <span className="flex w-[18px] justify-center"><Chevron d="M7 1L3 5l4 4" /></span>
          <span className="h-full w-[217px] bg-[#cdcdcd]" />
          <span className="ml-auto flex w-[17px] justify-center"><Chevron d="M3 1l4 4-4 4" /></span>
        </div>
      </div>
      <div role="tablist" className="flex h-[21px] shrink-0 items-start bg-[#e3e3e3]">
        <button type="button" role="tab" aria-selected="false" className="flex h-[20px] w-[77px] items-center gap-[3px] pt-px pl-[2px] whitespace-nowrap text-[#6d6d6d]">
          <Svg s={16}>
            <path d="M5 3h10v12l-3 1" fill="#c8d8ea" stroke="#3a5f80" />
            <path d="M.5 1.500h10v11H.5z" fill="#fff" stroke="#2a7a78" />
            <path d="M4 4h3M5.500 4v6M4 10h3" stroke="#2a4a6a" strokeWidth="1.300" />
          </Svg>
          指令分类
        </button>
        <button type="button" role="tab" aria-selected="true" className="flex h-[20px] w-[53px] items-center gap-[3px] rounded-b-[3px] border border-t-0 border-[#6a6a6a] bg-[#f6f6f6] pt-px pl-px whitespace-nowrap">
          <Svg s={16}>
            <path d="M.5 3.500h5l1 2v10h-6z" fill="#f7d978" stroke="#c39520" />
            <path d="M4.500 1.500h6l2 2v8h-8z" fill="#fff" stroke="#3a66b0" />
            <path d="M7.500 3.500h6l2 2v8h-8z" fill="#dce8f8" stroke="#3a66b0" />
            <path d="M9 7.500h5M9 9.500h5" stroke="#3a66b0" />
            <path d="M1 15.500v-3h13l-1 3z" fill="#f3c84d" stroke="#c39520" />
          </Svg>
          工程
        </button>
      </div>
    </aside>
  );
}

/* ---------- document ---------- */
const CloseX = () => (
  <Svg s={10}>
    <path d="M1 1l8 8M9 1L1 9" stroke="#000" strokeWidth="2" />
  </Svg>
);
const code = "font-['Liberation_Sans',sans-serif] text-[11px]";

function Document() {
  return (
    <section className="flex min-h-0 flex-1 flex-col border-t border-r border-[#9a9a9a]">
      <div className="flex h-[23px] shrink-0">
        <div className="mt-[3px] w-[113px] shrink-0 rounded-tr-[3px] border-t border-r border-[#6e6e6e] bg-[#fafafa]" />
        <div className="flex flex-1 items-center justify-end gap-[9px] border-b border-[#6e6e6e] bg-[#eeeeee] pr-[8px]">
          <button type="button" aria-label="窗口列表" className="border-x-4 border-t-4 border-x-transparent border-t-black" />
          <button type="button" aria-label="关闭"><CloseX /></button>
        </div>
      </div>
      <div className="mt-[4px] flex h-[25px] shrink-0 items-center gap-[12px] bg-linear-to-b from-[#fcfcfc] to-[#f0f0f0] pl-[109px]">
        <span className="-mr-[5px] h-[16px] w-px bg-[#bdbdbd]" />
        <button type="button">撤销</button>
        <button type="button" className="text-[#838383]">重做</button>
      </div>
      <div className="mt-px min-h-0 flex-1 border-2 border-[#5a5a5a] border-t-black border-l-black bg-white">
        <table className="w-full table-fixed border-collapse text-left">
          <colgroup>
            <col className="w-[370px]" />
            <col />
          </colgroup>
          <thead>
            <tr className="h-[21px] border-b border-[#a0a0a0]">
              <th className="border-r border-[#e2e2e2]" aria-label="命令" />
              <th className="pl-[6px] font-normal">注释</th>
            </tr>
          </thead>
          <tbody>
            {["", "X1", "X2", "M101", ""].map((v, i) => (
              <tr key={i} className="h-[18px] border-b border-[#ececec]">
                <td className={`border-r border-[#e2e2e2] pl-[100px] leading-none ${code} ${i === 0 ? "bg-[#b9cde8]" : ""} ${v === "M101" ? "text-[#4a1040]" : "text-[#1a0a1a]"}`}>{v}</td>
                <td />
              </tr>
            ))}
          </tbody>
        </table>
      </div>
    </section>
  );
}

function InfoPanel() {
  const cols = ["", "", "说明", "项目文件", "行", "列", ""];
  const cell = "border-r border-[#ececec] last:border-r-0";
  return (
    <section className="mt-[5px] flex h-[299px] shrink-0 flex-col">
      <div className={`${barHead} h-[18px] shrink-0 justify-between pt-px pr-[6px] pl-[6px]`}>
        <h2>信息</h2>
        <span className="flex items-center gap-[7px]">
          <button type="button" aria-label="自动隐藏">
            <Svg s={10} crisp>
              <path d="M3 0v6M7 0v6M3 .5h4M6 0v6M1 6.500h8M5 7v3" stroke="#000" />
            </Svg>
          </button>
          <button type="button" aria-label="关闭"><CloseX /></button>
        </span>
      </div>
      <div role="tablist" className="flex h-[22px] shrink-0 border-b border-[#d9d9d9] text-[12px]">
        <button type="button" role="tab" aria-selected="true" className="-mb-px w-[64px] border border-b-0 border-[#d9d9d9] bg-white pr-[2px] pb-[2px] whitespace-nowrap">错误列表</button>
        <button type="button" role="tab" aria-selected="false" className="mt-[2px] w-[38px] border border-b-0 border-l-0 border-[#d9d9d9] pr-[6px] whitespace-nowrap">输出</button>
      </div>
      <div className="mr-[2px] min-h-0 flex-1 border-x border-b border-[#d9d9d9] bg-white px-[6px] pt-[4px] pb-[5px]">
        <div className="h-full overflow-hidden border border-[#828790]">
          <table className="h-full w-full table-fixed border-collapse text-left">
            <colgroup>
              <col className="w-[21px]" />
              <col className="w-[20px]" />
              <col className="w-[320px]" />
              <col className="w-[115px]" />
              <col className="w-[44px]" />
              <col className="w-[41px]" />
              <col />
            </colgroup>
            <thead>
              <tr className="h-[25px]">
                {cols.map((c, i) => (
                  <th key={i} className={`${cell} pl-[5px] font-normal`}>{c}</th>
                ))}
              </tr>
            </thead>
            <tbody>
              {Array.from({ length: 12 }, (_, r) => (
                <tr key={r} className="h-[18px] border-b border-[#ececec]">
                  {cols.map((_, i) => (
                    <td key={i} className={cell} />
                  ))}
                </tr>
              ))}
              <tr>
                {cols.map((_, i) => (
                  <td key={i} className={cell} />
                ))}
              </tr>
            </tbody>
          </table>
        </div>
      </div>
    </section>
  );
}

/* ---------- taskbar ---------- */
const Heart = ({ x, y, k, c }) => (
  <path transform={`translate(${x} ${y}) scale(${k})`} d="M5 9C0 5 0 1 2.500 .5 4 .2 5 2 5 2s1-1.800 2.500-1.500C10 1 10 5 5 9z" fill={c} />
);
const Bird = () => (
  <>
    <path d="M0 21c8 2 12-4 17-9l10 6c2 6-2 12-9 12-6 0-9-3-11-6z" fill="#7f93a3" />
    <path d="M18 13c6-1 12 3 11 9-1 5-5 8-10 8-3-3 3-9-1-17z" fill="#efe3cf" />
    <circle cx="22" cy="10" r="8.500" fill="#6d8b9c" />
    <path d="M19 14c0-6 10-8 11-3 0 5-5 8-9 8-2-1-2-3-2-5z" fill="#f5ead8" />
    <circle cx="26" cy="9" r="1.300" fill="#222" />
    <path d="M30 9l3 1.500-3 1.500z" fill="#555" />
    <circle cx="24" cy="13" r="1.700" fill="#f3a9a0" />
    <path d="M3 21c6 2 10 5 17 1M6 24c5 2 8 3 12 0" stroke="#50677a" strokeWidth="1.200" />
  </>
);
const Birds = () => (
  <Svg w={76} h={38}>
    <path d="M4 30c10 3 20 1 32 3 16 2 28-5 40-3v8h-12c-8-4-20-3-30-3-12 0-18-1-30-5z" fill="#a87c4f" />
    <path d="M8 36l10-4M5 27l8 5" stroke="#a87c4f" strokeWidth="1.500" />
    <g transform="translate(2 1)"><Bird /></g>
    <g transform="translate(65 2) scale(-1 1)"><Bird /></g>
    <Heart x={5} y={4} k={0.950} c="#f58a8a" />
    <Heart x={0} y={11} k={0.600} c="#e53935" />
    <Heart x={57} y={5} k={1.200} c="#e0242c" />
    <Heart x={64} y={17} k={0.700} c="#f59a95" />
  </Svg>
);

const TASKS = [
  ["WPS", true, (
    <Svg key="w">
      <path d="M0 4h10l3 9 2-5-1-4h10l-7 17h-3l-3-7-3 7H8zM5 7l3.500 9 2-4.500L8.500 7zM17 7l-1 3.500 1 4.500L20 7z" fill="#f5351f" fillRule="evenodd" />
    </Svg>
  )],
  ["文件资源管理器", true, (
    <Svg key="e">
      <path d="M1 3h9l2 2h11v4H1z" fill="#e0a01a" />
      <path d="M1 6h22v14H1z" fill="#ffd968" />
      <path d="M5 13h14v8h-4v-4H9v4H5z" fill="#3b94e0" />
    </Svg>
  )],
  ["Chrome", false, (
    <Svg key="c">
      <circle cx="12" cy="12" r="12" fill="#fbc116" />
      <path d="M12 12L1.600 6A12 12 0 0122.400 6H12z" fill="#e33b2e" />
      <path d="M1.600 6A12 12 0 0012 24l5.200-9L12 12 6.800 15z" fill="#2ba24c" />
      <path d="M1.600 6A12 12 0 0122.400 6H12a6 6 0 00-5.200 9z" fill="#e33b2e" />
      <path d="M1.600 6L6.800 15a6 6 0 0010.400 0L12 24A12 12 0 011.600 6z" fill="#2ba24c" />
      <circle cx="12" cy="12" r="6" fill="#fff" />
      <circle cx="12" cy="12" r="4.700" fill="#2f7bea" />
    </Svg>
  )],
  ["钉钉", true, (
    <Svg key="d" s={22}>
      <rect width="22" height="22" rx="5" fill="#1296f5" />
      <path d="M5 3c2 3 9 3 11 7 .5 2-1 4-2 6h2l-6 4 1-4H9l1-2c-2 0-3-1-3-2 1 .2 1.500 0 2 0-3-1-4-3-4-5z" fill="#fff" />
    </Svg>
  )],
  ["Visual Studio", false, (
    <Svg key="v">
      <path d="M18 0l6 2v20l-6 2-17-5 17 1z" fill="#8d5fc9" />
      <path d="M2 6l5 4 6-5 2 1v11l-2 1-6-5-5 4-1-1V7zm1 3v5l2.500-2.500zm10-.5L9.500 11.500 13 14.500z" fill="#8556c4" fillRule="evenodd" />
    </Svg>
  )],
  ["微信", true, (
    <Svg key="x">
      <ellipse cx="9" cy="9.500" rx="9" ry="7.500" fill="#22c55e" />
      <path d="M3 14l0 5 5-3z" fill="#22c55e" />
      <circle cx="6" cy="7.500" r="1.200" fill="#15532c" />
      <circle cx="12" cy="7.500" r="1.200" fill="#15532c" />
      <ellipse cx="17" cy="15.500" rx="7" ry="6" fill="#ececec" />
      <path d="M19 20l3 3v-4z" fill="#ececec" />
      <circle cx="14.500" cy="14" r="1" fill="#777" />
      <circle cx="19" cy="14" r="1" fill="#777" />
    </Svg>
  )],
  ["助手", true, (
    <Svg key="a">
      <rect width="24" height="24" rx="5" fill="#b5d3ef" />
      <path d="M5.500 17V9.500c0-8.500 13-8.500 13 0V17z" fill="#44302c" />
      <path d="M6 24c0-6 12-6 12 0z" fill="#1d1d22" />
      <path d="M10.500 15h3v4l-1.500 1.500-1.500-1.500z" fill="#f0c8b4" />
      <ellipse cx="12" cy="11.500" rx="4.300" ry="5" fill="#f8d9c8" />
      <path d="M7 11c.5-3 3-4 4.500-5.500 1 2 4 2.500 5.500 5.500l-.5-5-4.500-2-4.500 2z" fill="#44302c" />
      <circle cx="10.200" cy="12" r=".8" fill="#222" />
      <circle cx="13.800" cy="12" r=".8" fill="#222" />
      <path d="M11.200 14.500h1.600" stroke="#d0605a" />
    </Svg>
  )],
];
const PlcTask = ({ s = 24 }) => (
  <svg width={s} height={s} viewBox="0 0 24 24" className="block shrink-0" aria-hidden="true">
    <path d="M0 1h24v22H0z" fill="#222" />
    <path d="M1.500 2.500h21v19h-21z" fill="#858585" />
    <path d="M2 4h20M2 20h20" stroke="#ddd" strokeDasharray="1 1" />
    <path d="M2 7.500h12v9H2z" fill="#f4f4f4" />
    <path d="M5.500 7.500v9M12 7.500v9" stroke="#999" strokeWidth=".8" />
    <path d="M14.500 6.500h4.500v11h-4.500z" fill="#2458b0" stroke="#fff" />
    <path d="M15.500 9h2.500" stroke="#e44" />
  </svg>
);
const Sogou = ({ s }) => (
  <svg width={s} height={s} viewBox="0 0 28 28" fill="none" className="block shrink-0" aria-hidden="true">
    <path d="M1 5L24 1l3 21-22 5z" fill="#2fb51e" stroke="#2fb51e" strokeWidth="2" strokeLinejoin="round" />
    <path d="M21 7.500c-5-2-13-1-13 3s12 2 12 6-8 5-13 2.500" stroke="#fff" strokeWidth="4" />
  </svg>
);

function Taskbar() {
  return (
    <footer className="relative flex h-[40px] shrink-0 items-stretch bg-linear-to-r from-[#21373f] via-[#22384a] to-[#182643] text-white">
      <button type="button" aria-label="开始" className="flex w-[48px] items-center justify-center">
        <Svg s={16}>
          <path d="M0 2.300l6.600-.9v6.200H0zM7.400 1.300L16 0v7.600H7.400zM0 8.400h6.600v6.200L0 13.700zM7.400 8.400H16V16l-8.600-1.200z" fill="#fff" />
        </Svg>
      </button>
      <label className="flex w-[288px] items-center border border-[#b9b9b9] bg-[#f2f2f2] pl-[10px] text-black">
        <Svg s={18}>
          <circle cx="11" cy="6.500" r="5.500" stroke="#222" strokeWidth="1.500" />
          <path d="M7 11l-6 6" stroke="#222" strokeWidth="1.500" />
        </Svg>
        <input type="text" aria-label="搜索" placeholder="搜索" className="ml-[11px] min-w-0 flex-1 bg-transparent text-[14px] outline-none placeholder:text-[#333]" />
        <Birds />
      </label>
      <button type="button" aria-label="任务视图" className="mr-px flex w-[49px] items-center justify-center">
        <Svg s={17}>
          <path d="M.5 1v3h11V1M.5 16v-3h11v3M.5 5.500h11v6H.500zM15.500 1v3M15.500 9v7" stroke="#fff" strokeWidth="1.200" />
          <path d="M14 5h3v3h-3z" fill="#fff" />
        </Svg>
      </button>
      {TASKS.map(([name, running, icon]) => (
        <button
          type="button"
          key={name}
          aria-label={name}
          className="flex w-[49px] items-center justify-center pt-px"
        >
          <span className={`flex h-full w-[40px] items-center justify-center border-b-2 ${running ? "border-[#76b9ed]" : "border-transparent"}`}>{icon}</span>
        </button>
      ))}
      <button type="button" aria-label="信捷PLC编程工具软件" className="ml-px flex w-[48px] items-center justify-center border-b-2 border-[#76b9ed] bg-[#4b5e67] pt-px">
        <PlcTask />
      </button>
      <div className="ml-auto flex items-center">
        <Svg w={20} h={24}>
          <path d="M3 13V4a3.500 3.500 0 017 0v9a5.500 5.500 0 11-7 0z" fill="#dcecf8" stroke="#7db8e8" />
          <path d="M6.500 6v10" stroke="#e04040" strokeWidth="2" />
          <circle cx="6.500" cy="17.500" r="3.300" fill="#1b6fd0" />
          <path d="M16 6v12M13 15l3 4 3-4" stroke="#2c8be8" strokeWidth="2" />
        </Svg>
        <span className="ml-[10px] text-[14px]">气温下降</span>
        <button type="button" aria-label="显示隐藏的图标" className="ml-[26px]">
          <Svg w={12} h={10}>
            <path d="M1 8l5-5 5 5" stroke="#fff" strokeWidth="1.500" />
          </Svg>
        </button>
        <span className="ml-[11px] text-[14px]">中</span>
        <span className="ml-[12px]"><Sogou s={16} /></span>
        <time className="ml-[10px] w-[72px] text-center text-[12px] leading-[19px]">
          9:25
          <br />
          2025/2/14
        </time>
        <button type="button" aria-label="通知" className="relative ml-[12px] flex h-[40px] w-[37px] items-center justify-start">
          <Svg w={20} h={20}>
            <path d="M1 2h13v12H7l-3 3v-3H1z" fill="#fff" />
            <path d="M4 6h7M4 9.500h7" stroke="#182643" />
          </Svg>
          <span className="absolute top-[20px] left-[8px] flex size-[16px] items-center justify-center rounded-full border border-[#999] bg-[#26303e] text-[11px] leading-none font-bold">3</span>
        </button>
        <span className="mr-[4px] h-[40px] w-px bg-[#5d6a7c]" />
      </div>
      <span className="pointer-events-none absolute right-[4px] bottom-[9px] font-['Liberation_Sans',sans-serif] text-[35px] leading-[40px] whitespace-nowrap text-[#d8d8d8]/70 [text-shadow:0_0_2px_#555]">
        CSDN @ytuan
      </span>
      <div className="absolute right-[2px] bottom-[42px] flex h-[24px] w-[148px] items-center justify-end gap-[8px] border border-[#b4c6d8] bg-[#f8fbfe] pr-[5px] text-[#4a5066]">
        <span className="absolute -top-[4px] -left-[17px]"><Sogou s={28} /></span>
        <span className="text-[14px] font-bold">五</span>
        <Svg s={14}>
          <path d="M9 1a7 7 0 11-8 9c5 1 9-3 8-9z" fill="#4a5066" />
        </Svg>
        <Svg s={14}>
          <circle cx="3.500" cy="4" r="2" stroke="#4a5066" strokeWidth="1.200" />
          <circle cx="10" cy="8.500" r="2" fill="#4a5066" />
          <path d="M11.500 8.500c0 2-1 3.500-2.500 4" stroke="#4a5066" strokeWidth="1.500" />
        </Svg>
        <Svg w={16} h={14}>
          <path d="M1 2h14v10H1z" stroke="#4a5066" strokeWidth="1.500" />
          <path d="M3 4.500h10M3 7h10" stroke="#4a5066" strokeWidth="1.300" strokeDasharray="1.500 1" />
          <path d="M4 9.500h8" stroke="#4a5066" strokeWidth="1.300" />
        </Svg>
        <Svg w={12} h={14}>
          <circle cx="6" cy="3.500" r="3" fill="#4a5066" />
          <path d="M0 9l4-2h4l4 2v2h-2v3H2v-3H0z" fill="#4a5066" />
        </Svg>
        <Svg s={14}>
          <rect x="0" y="1" width="6" height="6" rx="2.500" fill="#4a5066" />
          <rect x="8.500" y="1.500" width="4.500" height="4.500" rx="2" stroke="#4a5066" strokeWidth="1.500" />
          <rect x="0" y="8" width="6" height="6" rx="2.500" fill="#4a5066" />
          <rect x="8" y="8" width="6" height="6" rx="2.500" fill="#4a5066" />
        </Svg>
      </div>
    </footer>
  );
}

export default function App() {
  return (
    <div className={`flex h-screen flex-col overflow-hidden bg-linear-to-r from-[#f0f0f0] to-[#fdfdfd] text-[12px] leading-[16px] text-black ${UI}`}>
      <Defs />
      <header className="flex h-[23px] shrink-0 items-start bg-white pl-[2px]">
        <span className="pt-[3px]"><PlcTask s={16} /></span>
        <h1 className="pt-[4px] pl-[5px]">信捷PLC编程工具软件</h1>
        <div className="ml-auto flex pr-[3px]">
          <button type="button" aria-label="最小化" className="flex h-[20px] w-[45px] items-center justify-center">
            <Svg s={10} crisp><path d="M0 5.500h10" stroke="#000" /></Svg>
          </button>
          <button type="button" aria-label="还原" className="flex h-[20px] w-[46px] items-center justify-center">
            <Svg s={10} crisp><path d="M.5 2.500h7v7h-7zM2.500 2V.500h7v7H8" stroke="#000" /></Svg>
          </button>
          <button type="button" aria-label="关闭" className="flex h-[20px] w-[45px] items-center justify-center">
            <Svg s={10}><path d="M0 0l10 10M10 0L0 10" stroke="#000" /></Svg>
          </button>
        </div>
      </header>
      <div className="shrink-0">
        <MenuBar />
        <Toolbars />
      </div>
      <main className="flex min-h-0 flex-1 gap-[4px] bg-[#f0f0f0]">
        <ProjectPanel />
        <div className="flex min-w-0 flex-1 flex-col">
          <Document />
          <InfoPanel />
        </div>
      </main>
      <div className="grid h-[44px] shrink-0 grid-cols-[38%_1fr_auto] items-center border-t border-white whitespace-nowrap">
        <div className="flex gap-[40px] pl-[35px]">
          <span>行 0,列 1</span>
          <span>覆盖</span>
        </div>
        <div className="flex gap-[18px] pl-[2px]">
          <span>PLC1:XDH-60A32</span>
          <span>通讯方式:Com，站号:1</span>
        </div>
        <span className="pr-[174px] text-[#0000ff]">本地:USB_Xnet_Default</span>
      </div>
      <Taskbar />
    </div>
  );
}
